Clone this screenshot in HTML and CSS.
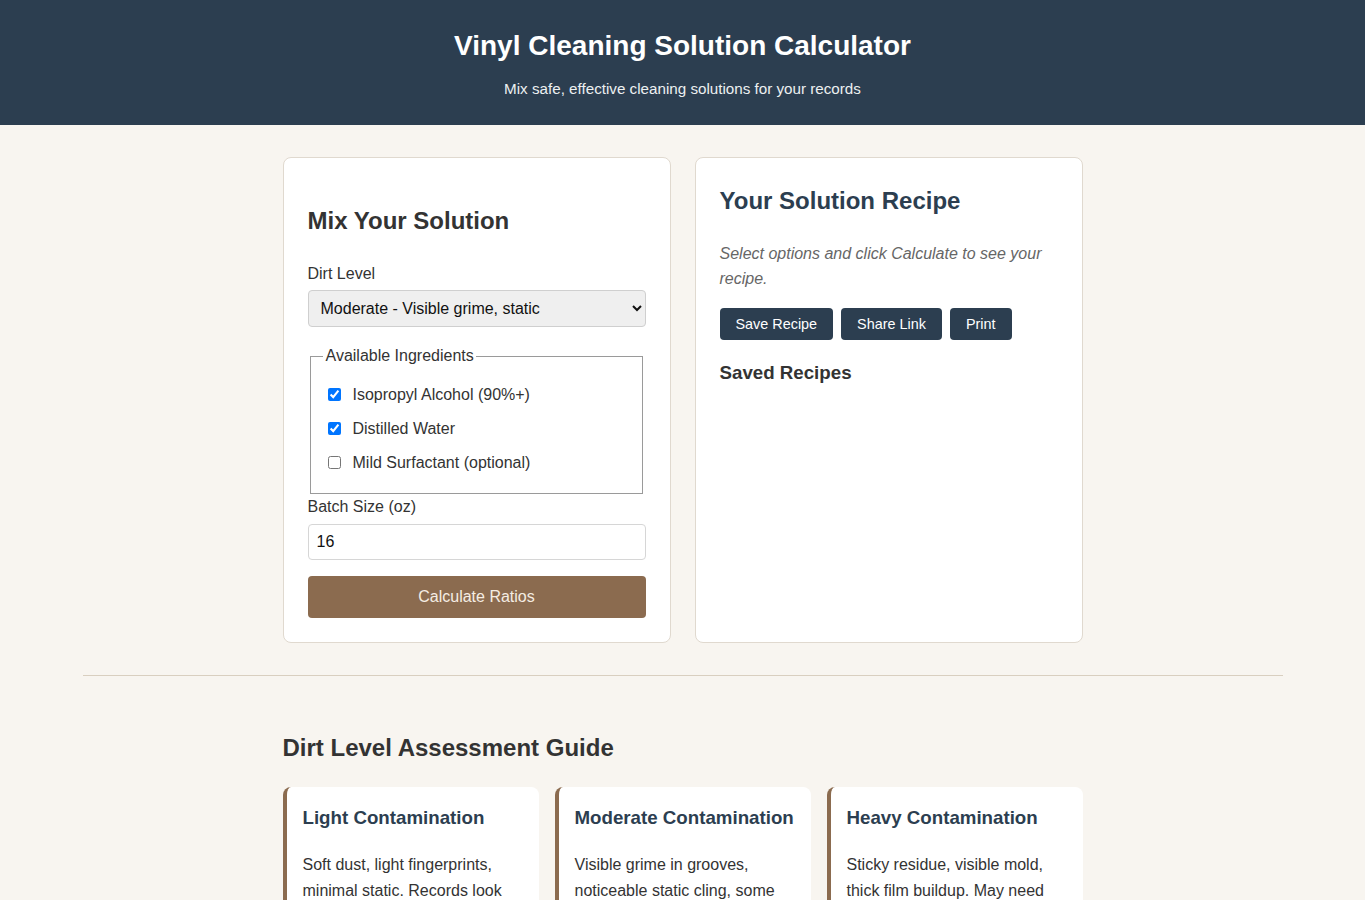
FILE: index.html
```html
<!DOCTYPE html>
<html lang="en">
<head>
  <meta charset="UTF-8">
  <meta name="viewport" content="width=device-width, initial-scale=1.0">
  <title>Vinyl Cleaning Solution Calculator</title>
  <link rel="stylesheet" href="styles.css">
</head>
<body>
  <header class="header">
    <h1>Vinyl Cleaning Solution Calculator</h1>
    <p class="tagline">Mix safe, effective cleaning solutions for your records</p>
  </header>

  <main class="container">
    <div class="calculator">
      <form class="card mixer" id="mixForm">
        <h2>Mix Your Solution</h2>

        <div class="form-group">
          <label for="dirtLevel">Dirt Level</label>
          <select id="dirtLevel">
            <option value="light">Light - Dust, fingerprints</option>
            <option value="moderate" selected>Moderate - Visible grime, static</option>
            <option value="heavy">Heavy - Sticky residue, mold</option>
          </select>
        </div>

        <fieldset class="ingredients">
          <legend>Available Ingredients</legend>
          <label class="check"><input type="checkbox" id="ipa" checked>Isopropyl Alcohol (90%+)</label>
          <label class="check"><input type="checkbox" id="water" checked>Distilled Water</label>
          <label class="check"><input type="checkbox" id="surfactant">Mild Surfactant (optional)</label>
        </fieldset>

        <div class="form-group">
          <label for="batchSize">Batch Size (oz)</label>
          <input type="number" id="batchSize" value="16" min="1">
        </div>

        <button type="button" class="btn-calc" id="calcBtn">Calculate Ratios</button>
      </form>

      <div class="card results">
        <h2>Your Solution Recipe</h2>
        <p class="placeholder" id="recipeOutput">Select options and click Calculate to see your recipe.</p>
        <div class="actions">
          <button type="button" class="btn">Save Recipe</button>
          <button type="button" class="btn">Share Link</button>
          <button type="button" class="btn">Print</button>
        </div>
        <h3>Saved Recipes</h3>
        <div class="saved-list" id="savedList"></div>
      </div>
    </div>

    <hr>

    <section class="guide">
      <h2>Dirt Level Assessment Guide</h2>
      <div class="guide-grid">
        <div class="guide-card">
          <h3>Light Contamination</h3>
          <p>Soft dust, light fingerprints, minimal static. Records look mostly clean but play with faint surface noise.</p>
        </div>
        <div class="guide-card">
          <h3>Moderate Contamination</h3>
          <p>Visible grime in grooves, noticeable static cling, some crackle and pops during playback.</p>
        </div>
        <div class="guide-card">
          <h3>Heavy Contamination</h3>
          <p>Sticky residue, visible mold, thick film buildup. May need several passes and a surfactant.</p>
        </div>
      </div>
    </section>
  </main>
</body>
</html>
```

FILE: styles.css
```css
:root {
  --navy: #2c3e50;
  --brown: #8b6b4f;
  --cream: #f8f5f0;
  --text: #333333;
  --muted: #666666;
  --border: #e0d9cf;
}

body {
  margin: 0;
  font-family: "Liberation Sans", Arial, sans-serif;
  color: var(--text);
  background-color: var(--cream);
  line-height: 1.6;
}

.header {
  background-color: var(--navy);
  color: #ffffff;
  text-align: center;
  padding: 25px 16px 24px;
}

.header h1 {
  font-size: 28px;
  margin: 0 0 10px;
  line-height: 1.5;
}

.tagline {
  margin: 0;
  font-size: 15.2px;
  color: #ecf0f1;
}

.container {
  max-width: 1200px;
  margin: 0 auto;
  padding: 32px 0;
}

.calculator {
  max-width: 800px;
  margin: 0 auto;
  display: grid;
  grid-template-columns: 1fr 1fr;
  gap: 24px;
}

.card {
  background: #ffffff;
  border: 1px solid var(--border);
  border-radius: 8px;
  padding: 24px;
}

.mixer h2 {
  font-size: 24px;
  margin: 20px 0;
}

.form-group {
  margin-bottom: 16px;
}

.form-group label {
  display: block;
  margin-bottom: 4px;
}

select,
input[type="number"] {
  width: 100%;
  box-sizing: border-box;
  font-family: inherit;
  font-size: 16px;
  padding: 8px;
  border: 1px solid #d6d6d6;
  border-radius: 4px;
  color: #111;
}

select {
  background-color: #efefef;
  border-color: #cfcfcf;
}

input[type="number"] {
  background: #ffffff;
  -moz-appearance: textfield;
}

input[type="number"]::-webkit-inner-spin-button,
input[type="number"]::-webkit-outer-spin-button {
  -webkit-appearance: none;
  margin: 0;
}

.ingredients {
  margin: 0 3px 0 2px;
  border: 1px solid #9a9a9a;
}

.ingredients legend {
  padding: 0 2px 0 3px;
}

.check {
  display: block;
  margin: 8px 0;
}

.check input {
  margin: 3px 12px 3px 5px;
  vertical-align: -1px;
}

.btn-calc {
  display: block;
  width: 100%;
  font-family: inherit;
  font-size: 16px;
  line-height: 26px;
  padding: 8px;
  border: none;
  border-radius: 4px;
  background-color: var(--brown);
  color: #f5ede3;
  cursor: pointer;
}

.results h2 {
  font-size: 24px;
  margin: 0 0 20px;
  color: var(--navy);
}

.placeholder {
  font-style: italic;
  color: var(--muted);
  margin: 0 0 16px;
}

.actions {
  display: flex;
  gap: 8px;
}

.btn {
  font-family: inherit;
  font-size: 14.4px;
  padding: 8px 16px;
  border: none;
  border-radius: 4px;
  background-color: var(--navy);
  color: #ffffff;
  cursor: pointer;
}

.results h3 {
  font-size: 18.72px;
  margin: 18px 0 8px;
}

hr {
  margin: 32px 0;
  border: none;
  border-top: 1px solid #d9cfc0;
}

.guide {
  max-width: 800px;
  margin: 0 auto;
}

.guide h2 {
  font-size: 24px;
  margin: 53px 0 20px;
}

.guide-grid {
  display: grid;
  grid-template-columns: repeat(3, 1fr);
  gap: 16px;
}

.guide-card {
  background: #ffffff;
  border-left: 4px solid var(--brown);
  border-radius: 8px;
  padding: 16px;
}

.guide-card h3 {
  font-size: 18.72px;
  color: var(--navy);
  margin: 0 0 18.72px;
}

.guide-card p {
  margin: 0;
}
```
